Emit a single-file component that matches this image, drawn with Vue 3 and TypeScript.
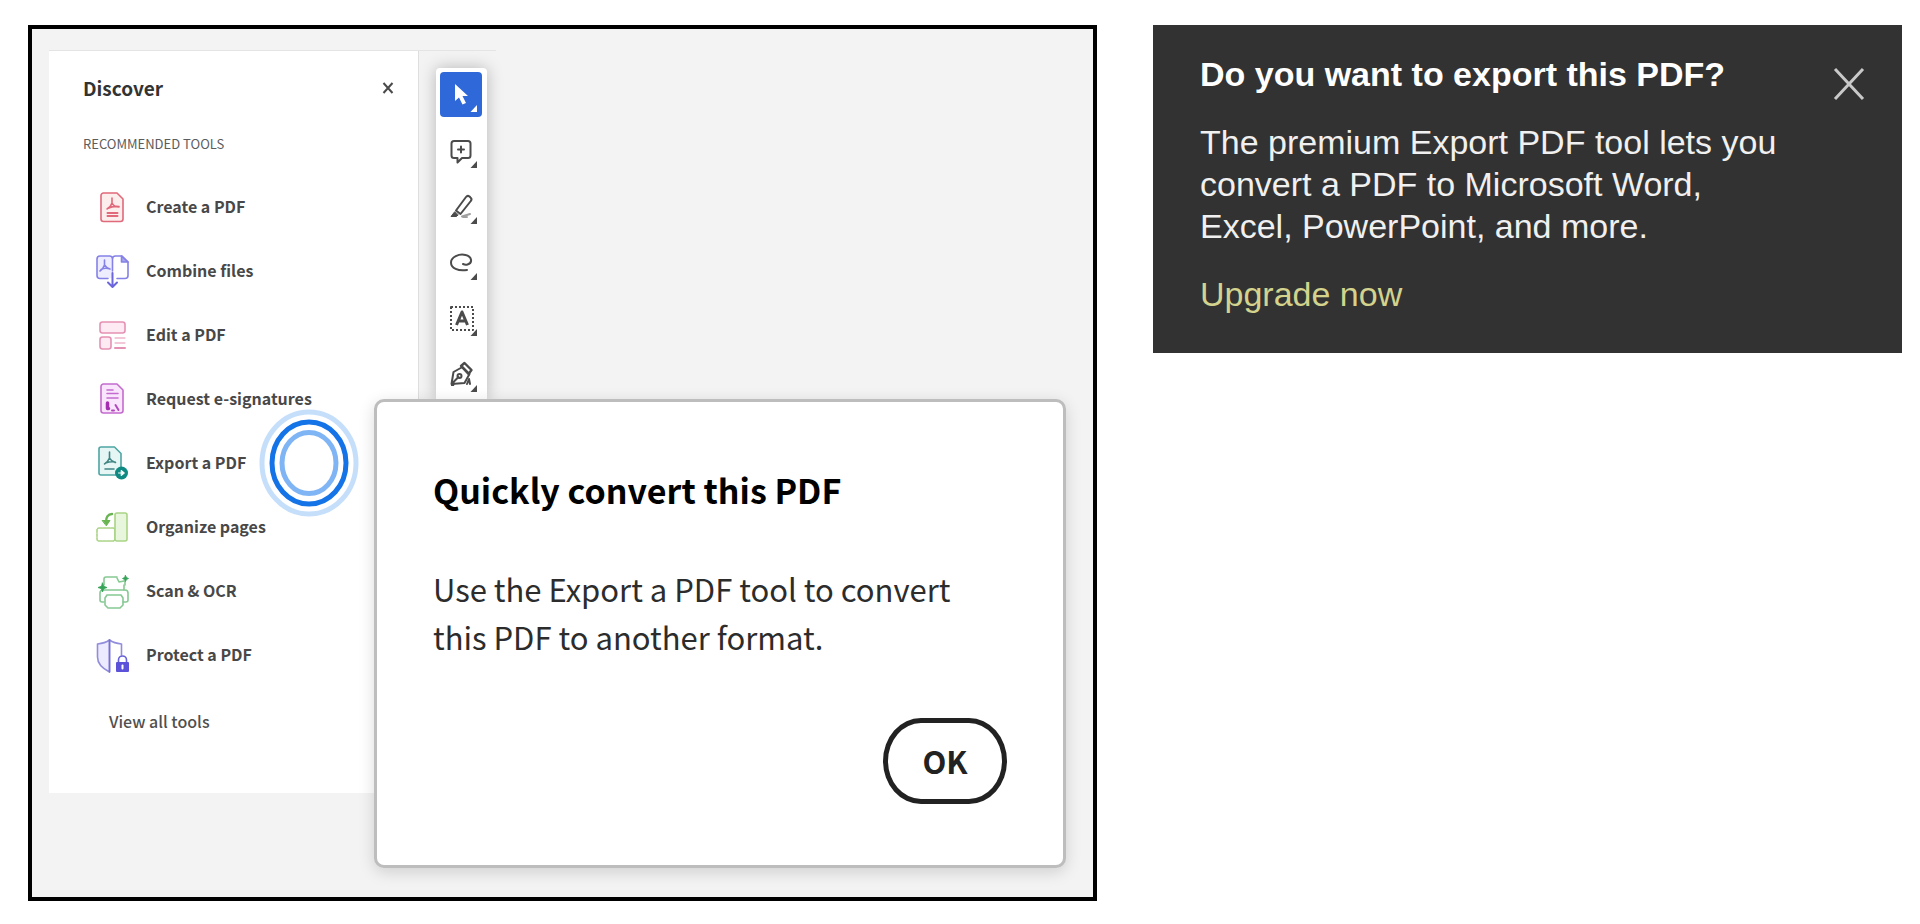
<script setup lang="ts">
import { ref } from 'vue'

interface Item {
  id: string
  label: string
}

const tools: Item[] = [
  { id: 'create', label: 'Create a PDF' },
  { id: 'combine', label: 'Combine files' },
  { id: 'edit', label: 'Edit a PDF' },
  { id: 'request', label: 'Request e-signatures' },
  { id: 'export', label: 'Export a PDF' },
  { id: 'organize', label: 'Organize pages' },
  { id: 'scan', label: 'Scan & OCR' },
  { id: 'protect', label: 'Protect a PDF' },
]

const quickTools: Item[] = [
  { id: 'select', label: 'Select' },
  { id: 'comment', label: 'Add comment' },
  { id: 'highlight', label: 'Highlight' },
  { id: 'draw', label: 'Draw freeform' },
  { id: 'text', label: 'Select text' },
  { id: 'sign', label: 'Fill and sign' },
]

const activeTool = ref('select')
</script>

<template>
  <main class="page">
    <section class="frame">
      <div class="workspace">
        <aside class="panel">
          <header class="panel-head">
            <h2>Discover</h2>
            <button type="button" class="close" aria-label="Close panel">
              <svg width="12" height="12" viewBox="0 0 12 12" fill="none" stroke="#4a4a4a" stroke-width="2">
                <path d="M1.500 1l9 10M10.500 1l-9 10" />
              </svg>
            </button>
          </header>
          <h3>RECOMMENDED TOOLS</h3>
          <ul class="tools">
            <li v-for="tool in tools" :key="tool.id">
              <button type="button" class="tool">
                <svg class="tool-icon" viewBox="0 0 36 36" fill="none" stroke-width="1.6" stroke-linecap="round" stroke-linejoin="round" aria-hidden="true">
                  <g v-if="tool.id === 'create'" stroke="#e0697a">
                    <path d="M9.500 4h13.500l6 6v20a2.500 2.500 0 0 1-2.500 2.500h-17A2.500 2.500 0 0 1 7 30V6.500A2.500 2.500 0 0 1 9.500 4z" fill="#fdeeee" />
                    <path d="M18 9v5c-1 3-3 5-5 6M18 14c1.500 3 4 4 7 4M13.500 19.500c4-2 7-2.500 11.500-2" />
                    <path d="M13.500 24h10M13.500 27h10" stroke-width="2" />
                  </g>
                  <g v-else-if="tool.id === 'combine'" stroke="#8581e6">
                    <path d="M18.500 25H6a3 3 0 0 1-3-3V6a3 3 0 0 1 3-3h12.500z" fill="#eeedff" stroke="none" />
                    <path d="M14 25.500H6a3 3 0 0 1-3-3V6a3 3 0 0 1 3-3h9.500a3 3 0 0 1 3 3v12M18.500 6a3 3 0 0 1 3-3H28l6 6v13.500a3 3 0 0 1-3 3h-8" />
                    <path d="M27.500 3v6H34z" fill="#a9a6ef" />
                    <path d="M10.500 7v5c-1 3-2.500 4.500-4.500 6M10.500 12c1.500 2.500 3 3.500 5.500 4M7 16.500c3-1.500 6-1.500 9-.5" />
                    <path d="M18.500 20v13M14 29.500l4.500 4.500 4.500-4.500" stroke="#6c66dc" stroke-width="2" />
                  </g>
                  <g v-else-if="tool.id === 'edit'" stroke="#e591b3">
                    <rect x="6" y="5" width="25" height="11" rx="2.500" fill="#fdeaf3" />
                    <rect x="6" y="20" width="11" height="12" rx="2.500" fill="#fdeaf3" />
                    <path d="M21 21h10M21 26h10" stroke-width="1" />
                    <path d="M21 31h10" stroke-width="2" />
                  </g>
                  <g v-else-if="tool.id === 'request'" stroke="#c46cce">
                    <path d="M9.500 3h13.500l6 6v20.500a2.500 2.500 0 0 1-2.500 2.500h-17A2.500 2.500 0 0 1 7 29.500v-24A2.500 2.500 0 0 1 9.500 3z" fill="#fae6fc" />
                    <path d="M13 9h6M13 12.500h11M13 17h11" />
                    <path d="M13.500 22v5.500h1" stroke="#a52db2" stroke-width="3.500" />
                    <path d="M21.500 24l3 5M18 29.500h2" stroke="#b248bd" stroke-width="2" />
                  </g>
                  <g v-else-if="tool.id === 'export'" stroke="#4ea5a3">
                    <path d="M7 2h13.500l6.500 6.500V30H7a2 2 0 0 1-2-2V4a2 2 0 0 1 2-2z" fill="#e5f6f5" />
                    <path d="M15.500 7v6c-1.500 3.500-3 5-5 6M15.500 13c1.500 3 3.500 3.500 6 4.500M11.500 18c3-1 6-1.500 9.500-1M11 24h9" stroke="#3f8583" />
                    <circle cx="27.500" cy="28" r="6.500" fill="#0f8a83" stroke="none" />
                    <path d="M24.500 28h4M27.500 25.500l3 2.500-3 2.500z" stroke="#fff" fill="#fff" stroke-width="1" />
                  </g>
                  <g v-else-if="tool.id === 'organize'" stroke="#a9d485">
                    <rect x="3" y="19" width="18" height="13" rx="2" stroke-dasharray="3 1" />
                    <rect x="21" y="4" width="12" height="28" rx="2" fill="#e7f6dc" />
                    <path d="M18 5c-4 0-6 3-6 8" stroke="#68b552" stroke-width="2.400" />
                    <path d="M8.500 11.500h7.500l-3.500 5z" fill="#68b552" stroke="#68b552" stroke-width="1" />
                  </g>
                  <g v-else-if="tool.id === 'scan'" stroke="#86c993">
                    <path d="M10 12V6a2 2 0 0 1 2-2h11M30 12v5" />
                    <path d="M10 29H8a2 2 0 0 1-2-2v-7a3 3 0 0 1 3-3h22a3 3 0 0 1 3 3v7a2 2 0 0 1-2 2h-3" />
                    <path d="M13 22h14l2 3v7l-3 3H14l-3-3v-7z" />
                    <path d="M23 5l2 4 5-1M31 8v4" />
                    <path d="M8.500 10l1.200 3.300L13 14.500l-3.300 1.200L8.500 19l-1.200-3.300L4 14.500l3.300-1.200zM31.500 2.500l1 2 2 1-2 1-1 2-1-2-2-1 2-1z" fill="#35a357" stroke="#35a357" stroke-width=".8" />
                  </g>
                  <g v-else stroke="#918ddc">
                    <path d="M15.500 3C12 5.500 8 6.500 3.500 7v13c0 7 6 12 12 15z" fill="#eceaff" />
                    <path d="M15.500 3C19 5.500 23 6.500 27.500 7v11" />
                    <path d="M15.500 3v32" stroke="#7772cf" />
                    <path d="M24.500 26v-3a4 4 0 0 1 8 0v3" stroke="#6861dc" />
                    <rect x="22" y="25" width="13" height="10" rx="1" fill="#5b52d9" stroke="none" />
                    <path d="M28.500 28.500v3" stroke="#fff" stroke-width="2" />
                  </g>
                </svg>
                <span>{{ tool.label }}</span>
              </button>
            </li>
          </ul>
          <a href="#" class="view-all">View all tools</a>
        </aside>

        <nav class="quickbar" aria-label="Quick tools">
          <button
            v-for="item in quickTools"
            :key="item.id"
            type="button"
            class="quick"
            :class="{ active: item.id === activeTool }"
            :aria-label="item.label"
            @click="activeTool = item.id"
          >
            <svg viewBox="0 0 42 45" fill="none" stroke="currentColor" stroke-width="2" stroke-linecap="round" stroke-linejoin="round">
              <path v-if="item.id === 'select'" d="M15 12v17l4-3.500 3.500 7 3.500-1.500-3.500-7H28z" fill="currentColor" stroke="none" />
              <g v-else-if="item.id === 'comment'">
                <path d="M14 13h14a2.500 2.500 0 0 1 2.500 2.500v12A2.500 2.500 0 0 1 28 30h-6l-4.500 4.500V30H14a2.500 2.500 0 0 1-2.500-2.500v-12A2.500 2.500 0 0 1 14 13z" />
                <path d="M21 18.500v6M18 21.500h6" />
              </g>
              <g v-else-if="item.id === 'highlight'">
                <path d="M16 26.500L26 13a2.500 2.500 0 0 1 3.500-.5l1 1a2.500 2.500 0 0 1 .3 3.500L20.500 30z" />
                <path d="M14.500 28l-3.500 4.500h5.500l1.500-1.500z" fill="currentColor" stroke-width="1" />
                <path d="M22 32.500l8-2.500M23 33h4" stroke="#a0a0a0" />
              </g>
              <path v-else-if="item.id === 'draw'" d="M27 30c-9 1.500-16-2-16-7.500s8-9 14.500-7.500 7.500 8 2 9.500c-2 .5-3.500 0-4.500-.5" />
              <g v-else-if="item.id === 'text'">
                <rect x="11" y="11" width="22" height="23" stroke-dasharray="2 2" stroke-linecap="butt" />
                <path d="M16.500 29L22 16l5.500 13M18.500 25h7" stroke-width="3" stroke-linecap="butt" />
              </g>
              <g v-else>
                <path d="M11.500 32l2-12 9-5 7 7-5 9z" />
                <path d="M21 14l3.500-3 7 7-3 4z" stroke-width="2.400" />
                <path d="M12.500 31l6-6M27 32l2-5 1 5" />
                <circle cx="19.500" cy="24" r="2" />
                <path d="M11 28l4 3-1 3h-3z" fill="currentColor" stroke="none" />
              </g>
              <path d="M37 33v7h-6.500z" fill="currentColor" stroke="none" />
            </svg>
          </button>
        </nav>
      </div>

      <svg class="beacon" width="100" height="110" viewBox="0 0 100 110" fill="none" aria-hidden="true">
        <ellipse cx="50" cy="55" rx="47" ry="51" stroke="#c5dffb" stroke-width="5" />
        <ellipse cx="50" cy="55" rx="37" ry="41" stroke="#1473e6" stroke-width="5" />
        <ellipse cx="50" cy="55" rx="27" ry="30.500" stroke="#80b5f5" stroke-width="5" />
      </svg>

      <div class="dialog" role="dialog" aria-labelledby="convert-title">
        <h1 id="convert-title">Quickly convert this PDF</h1>
        <p>Use the Export a PDF tool to convert<br />this PDF to another format.</p>
        <button type="button" class="ok">OK</button>
      </div>
    </section>

    <section class="promo">
      <div class="promo-text">
        <h2>Do you want to export this PDF?</h2>
        <p>The premium Export PDF tool lets you<br />convert a PDF to Microsoft Word,<br />Excel, PowerPoint, and more.</p>
        <a href="#">Upgrade now</a>
      </div>
      <button type="button" class="promo-close" aria-label="Close">
        <svg width="32" height="34" viewBox="0 0 32 34" fill="none" stroke="#c9c9c9" stroke-width="3">
          <path d="M2 2l28 30M30 2L2 32" />
        </svg>
      </button>
    </section>
  </main>
</template>

<style>
body {
  margin: 0;
  background: #fff;
}
</style>

<style scoped>
.page {
  display: grid;
  grid-template-columns: 1069fr 749fr;
  align-items: start;
  gap: 56px;
  padding: 25px 18px 20px 28px;
  font-family: "Noto Sans CJK SC", "Open Sans", sans-serif;
}

h1,
h2,
h3,
p,
ul {
  margin: 0;
  padding: 0;
}

button {
  margin: 0;
  padding: 0;
  border: 0;
  background: none;
  font-family: inherit;
  cursor: pointer;
}

a {
  text-decoration: none;
}

svg {
  display: block;
}

.frame {
  position: relative;
  padding: 21px 17px 104px;
  border: 4px solid #000;
  background: #f3f3f3;
}

.workspace {
  display: flex;
  align-items: flex-start;
  gap: 17px;
  width: 447px;
  border-top: 1px solid #e4e4e4;
}

.panel {
  flex: 1;
  box-sizing: border-box;
  padding: 23px 0 58px 34px;
  border-right: 1px solid #dedede;
  background: #fff;
}

.panel-head {
  display: flex;
  justify-content: space-between;
  align-items: center;
  padding-right: 24px;
}

.panel-head h2 {
  color: #333;
  font-size: 19px;
  line-height: 28px;
}

.panel h3 {
  margin: 32px 0 21px;
  color: #5c5c5c;
  font-size: 13px;
  font-weight: 400;
  line-height: 20px;
}

.tools {
  padding-left: 11px;
  list-style: none;
}

.tool {
  display: flex;
  align-items: center;
  gap: 16px;
  width: 100%;
  height: 64px;
  color: #484848;
  font-size: 16px;
  font-weight: 700;
  line-height: 24px;
  text-align: left;
}

.tool-icon {
  width: 36px;
  height: 36px;
}

.tool span {
  padding-bottom: 2px;
}

.view-all {
  display: block;
  margin: 20px 0 0 26px;
  color: #505050;
  font-size: 16px;
  font-weight: 500;
  line-height: 28px;
}

.quickbar {
  display: flex;
  flex-direction: column;
  gap: 11px;
  margin-top: 17px;
  margin-right: 9px;
  padding: 4px 5px 4px 4px;
  border-radius: 4px 4px 0 0;
  background: #fff;
  box-shadow: 0 0 16px rgba(0, 0, 0, 0.25);
}

.quick {
  width: 42px;
  height: 45px;
  border-radius: 4px;
  color: #4b4b4b;
}

.quick.active {
  background: #2f68d8;
  color: #fff;
}

.beacon {
  position: absolute;
  top: 379px;
  left: 227px;
}

.dialog {
  position: absolute;
  top: 370px;
  right: 27px;
  left: 342px;
  display: flex;
  flex-direction: column;
  box-sizing: border-box;
  padding: 64px 56px 61px;
  border: 3px solid #bdbdbd;
  border-radius: 10px;
  background: #fff;
  box-shadow: 0 4px 16px rgba(0, 0, 0, 0.15);
}

.dialog h1 {
  color: #000;
  font-size: 34px;
  line-height: 48px;
}

.dialog p {
  margin-top: 51px;
  color: #2c2c2c;
  font-size: 31px;
  line-height: 48px;
}

.ok {
  align-self: flex-end;
  width: 124px;
  height: 86px;
  margin-top: 57px;
  border: 5px solid #222;
  border-radius: 38px / 43px;
  color: #222;
  font-size: 31px;
  font-weight: 700;
  line-height: 40px;
}

.promo {
  display: flex;
  justify-content: space-between;
  align-items: flex-start;
  padding: 28px 37px 38px 47px;
  background: #323232;
  font-family: "Liberation Sans", Arial, sans-serif;
  font-size: 34px;
  line-height: 42px;
}

.promo h2 {
  color: #fff;
  font-size: 34px;
}

.promo p {
  margin: 26px 0;
  color: #f0f0f0;
}

.promo a {
  display: block;
  color: #d3d38e;
}

.promo-close {
  margin-top: 14px;
}
</style>
